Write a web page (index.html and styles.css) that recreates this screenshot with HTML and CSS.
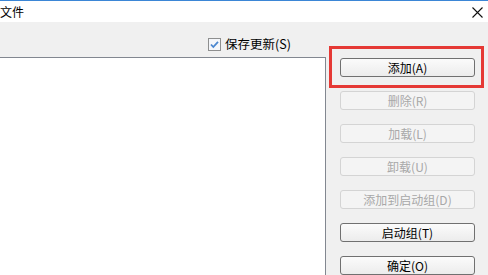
FILE: index.html
```html
<!DOCTYPE html>
<html lang="zh-CN">

<head>
    <meta charset="UTF-8">
    <meta name="viewport" content="width=device-width, initial-scale=1.0">
    <title>文件</title>
    <link rel="stylesheet" href="styles.css">
</head>

<body>
    <div class="window">
        <div class="titlebar">
            <span class="title">文件</span>
            <svg class="close" width="11" height="11" viewBox="0 0 11 11">
                <path d="M0.5 0.5 L10.5 10.5 M10.5 0.5 L0.5 10.5" stroke="#111" stroke-width="1.1" fill="none"/>
            </svg>
        </div>

        <div class="content">
            <div class="left">
                <label class="save-row">
                    <svg class="checkbox" width="13" height="13" viewBox="0 0 13 13">
                        <rect x="0.5" y="0.5" width="12" height="12" fill="#f4f6fa" stroke="#8e8f8f"/>
                        <path d="M3 6.5 L5.3 9 L10 3.8" stroke="#4a86cf" stroke-width="1.8" fill="none"/>
                    </svg>
                    <span>保存更新(S)</span>
                </label>
                <div class="list"></div>
            </div>

            <div class="buttons">
                <div class="highlight"></div>
                <button class="btn">添加(A)</button>
                <button class="btn" disabled>删除(R)</button>
                <button class="btn" disabled>加载(L)</button>
                <button class="btn" disabled>卸载(U)</button>
                <button class="btn" disabled>添加到启动组(D)</button>
                <button class="btn">启动组(T)</button>
                <button class="btn">确定(O)</button>
            </div>
        </div>
    </div>
</body>

</html>
```

FILE: styles.css
```css
body {
    margin: 0;
    font-family: "Noto Sans CJK SC", "Liberation Sans", sans-serif;
    font-size: 12px;
    color: #000;
    background-color: #f0f0f0;
    overflow: hidden;
}

.window {
    width: 488px;
    height: 275px;
    display: flex;
    flex-direction: column;
    overflow: hidden;
}

.titlebar {
    height: 25px;
    border-top: 1px solid #3b86d6;
    background-color: #fff;
    display: flex;
    align-items: center;
    justify-content: space-between;
}

.title {
    margin-left: 0;
    font-size: 12px;
    line-height: 14px;
}

.close {
    margin-right: 5px;
    margin-top: 1px;
}

.content {
    flex: 1;
    display: flex;
    position: relative;
}

.left {
    width: 326px;
    display: flex;
    flex-direction: column;
}

.save-row {
    height: 35px;
    box-sizing: border-box;
    display: flex;
    align-items: flex-end;
    padding-left: 208px;
    padding-bottom: 6px;
    gap: 4px;
}

.save-row span {
    line-height: 14px;
    font-size: 12.5px;
}

.list {
    flex: 1;
    background-color: #fff;
    border-top: 1px solid #828790;
    border-right: 1px solid #828790;
}

.buttons {
    display: flex;
    flex-direction: column;
    padding-top: 36px;
    padding-left: 14px;
    gap: 14px;
}

.btn {
    width: 135px;
    height: 19px;
    padding: 0;
    font-family: "Noto Sans CJK SC", "Liberation Sans", sans-serif;
    font-size: 12px;
    line-height: 17px;
    color: #000;
    border: 1px solid #707070;
    border-radius: 3px;
    background: linear-gradient(#fbfbfb, #ececec);
}

.btn:disabled {
    color: #a8a8a8;
    border-color: #d4d4d4;
    background: #f4f4f4;
}

.highlight {
    position: absolute;
    left: 329px;
    top: 24px;
    width: 149px;
    height: 36px;
    border: 3px solid #e53935;
}
```
